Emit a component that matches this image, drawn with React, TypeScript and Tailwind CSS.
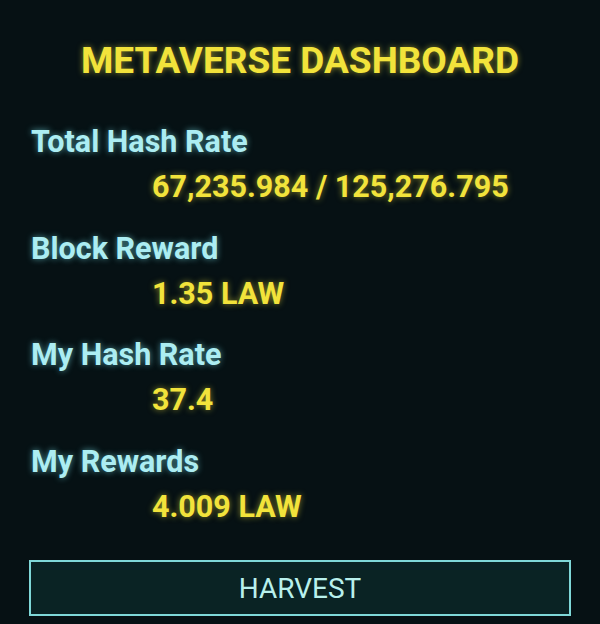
const stats = [
  { label: "Total Hash Rate", value: "67,235.984 / 125,276.795" },
  { label: "Block Reward", value: "1.35 LAW" },
  { label: "My Hash Rate", value: "37.4" },
  { label: "My Rewards", value: "4.009 LAW" },
];

export default function App() {
  return (
    <div className="w-[600px] h-[624px] bg-[#061114] font-['Roboto',sans-serif] px-[29px] pt-[39px] overflow-hidden">
      <h1 className="text-center text-[37px] leading-[44px] font-bold text-[#f2e33b] [text-shadow:0_0_6px_rgba(244,227,58,0.55)]">
        METAVERSE DASHBOARD
      </h1>
      <div className="mt-[36px] flex flex-col">
        {stats.map((s) => (
          <div key={s.label} className="h-[106.5px]">
            <div className="pl-[2px] text-[30.5px] leading-[45px] font-bold text-[#acedf2] [text-shadow:0_0_6px_rgba(120,230,240,0.6)]">
              {s.label}
            </div>
            <div className="pl-[123px] text-[30.5px] leading-[45px] font-bold text-[#f2e33b] [text-shadow:0_0_6px_rgba(244,227,58,0.55)]">
              {s.value}
            </div>
          </div>
        ))}
      </div>
      <button className="mt-[15px] w-full h-[56px] pt-[2px] border-2 border-[#7fd8d8] bg-[#0a2324] text-[#b8f0ec] text-[28px] font-normal">
        HARVEST
      </button>
    </div>
  );
}
